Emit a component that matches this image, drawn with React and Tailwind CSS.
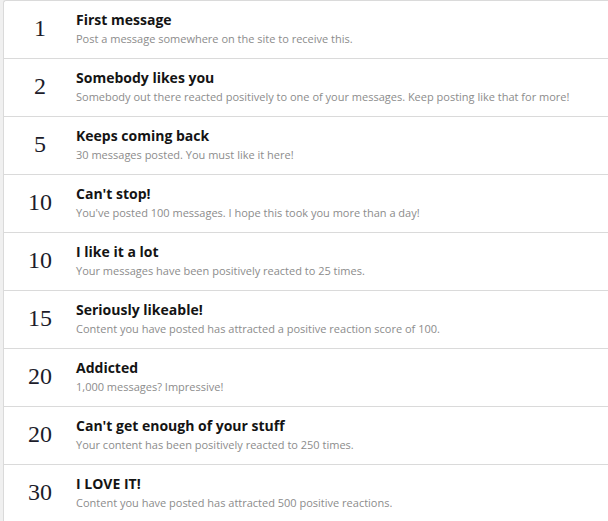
import React from 'react';

const trophies = [
    { points: 1, title: 'First message', desc: 'Post a message somewhere on the site to receive this.' },
    { points: 2, title: 'Somebody likes you', desc: 'Somebody out there reacted positively to one of your messages. Keep posting like that for more!' },
    { points: 5, title: 'Keeps coming back', desc: '30 messages posted. You must like it here!' },
    { points: 10, title: "Can't stop!", desc: "You've posted 100 messages. I hope this took you more than a day!" },
    { points: 10, title: 'I like it a lot', desc: 'Your messages have been positively reacted to 25 times.' },
    { points: 15, title: 'Seriously likeable!', desc: 'Content you have posted has attracted a positive reaction score of 100.' },
    { points: 20, title: 'Addicted', desc: '1,000 messages? Impressive!' },
    { points: 20, title: "Can't get enough of your stuff", desc: 'Your content has been positively reacted to 250 times.' },
    { points: 30, title: 'I LOVE IT!', desc: 'Content you have posted has attracted 500 positive reactions.' },
];

const App = () => {
    return (
        <div className="min-h-screen bg-[#f0f0f0] pl-[3px] overflow-hidden">
            <ol className="bg-white border-l border-t border-[#dadada] rounded-tl-[3px] w-[640px]">
                {trophies.map((t, i) => (
                    <li key={i} className="flex items-center h-[58px] border-b border-[#dadada]">
                        <div className="w-[72px] shrink-0 mb-[3px] text-center text-[24px] leading-none text-[#1c1c2a] font-['Liberation_Serif',serif]">
                            {t.points}
                        </div>
                        <div className="flex flex-col mb-[3px] font-['Open_Sans',sans-serif]">
                            <h3 className="text-[14px] font-bold leading-[20px] text-[#141414]">{t.title}</h3>
                            <p className="text-[11px] leading-[17px] text-[#8c8c8c]">{t.desc}</p>
                        </div>
                    </li>
                ))}
            </ol>
        </div>
    );
};

export default App;
